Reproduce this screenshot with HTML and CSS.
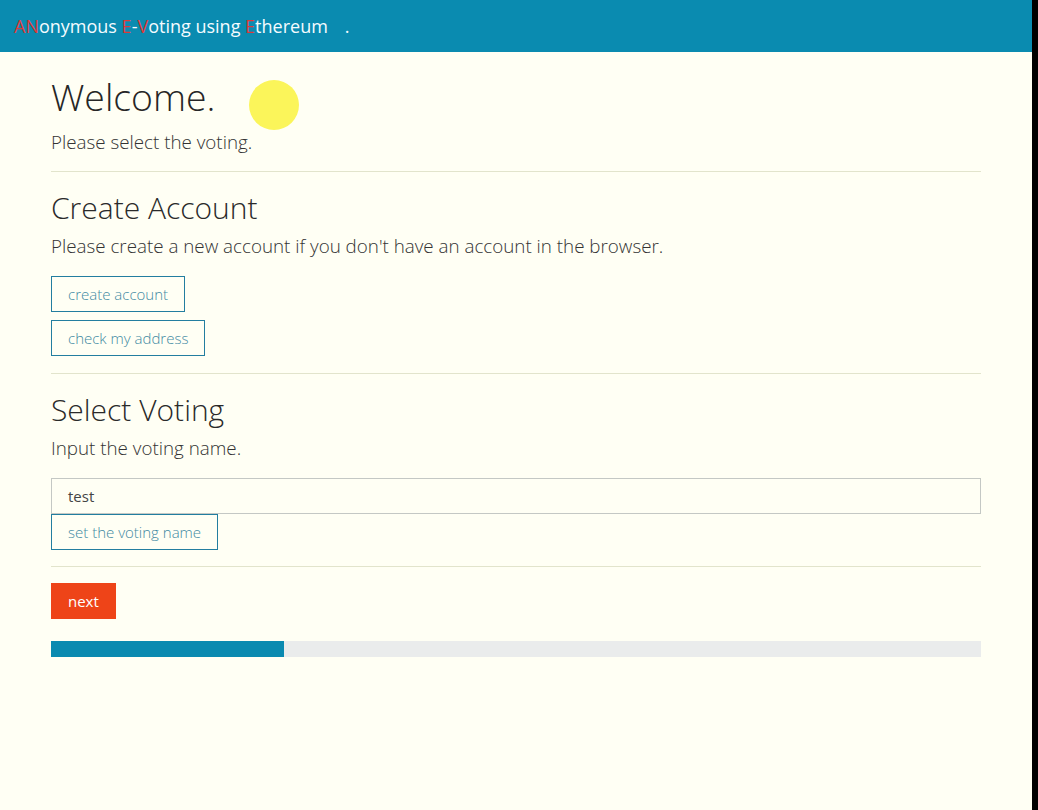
FILE: index.html
```html
<!DOCTYPE html>
<html>
<head>
<meta charset="utf-8">
<link rel="stylesheet" href="styles.css">
</head>
<body>
<div class="page">
  <header class="topbar">
    <span class="brand"><span class="r">AN</span>onymous <span class="r">E</span>-<span class="r">V</span>oting using <span class="r">E</span>thereum</span>
    <span class="dot">.</span>
  </header>
  <main class="content">
    <section class="intro">
      <h1>Welcome.</h1>
      <span class="spot"></span>
      <p>Please select the voting.</p>
    </section>
    <hr class="hr1">
    <section>
      <h2>Create Account</h2>
      <p>Please create a new account if you don't have an account in the browser.</p>
      <div class="stack">
        <button class="btn">create account</button>
        <button class="btn">check my address</button>
      </div>
    </section>
    <hr>
    <section>
      <h2>Select Voting</h2>
      <p>Input the voting name.</p>
      <div class="field">test</div>
      <button class="btn">set the voting name</button>
    </section>
    <hr class="hr3">
    <button class="next">next</button>
    <div class="progress"><div class="fill" style="width:25.1%"></div></div>
  </main>
</div>
<div class="edge"></div>
</body>
</html>
```
FILE: styles.css
```css
html, body {
  margin: 0;
  padding: 0;
  height: 100%;
}
body {
  background: #fffff4;
  font-family: "Open Sans", "DejaVu Sans", sans-serif;
  font-weight: 300;
  color: #2a2a2a;
  overflow: hidden;
}
.page {
  width: 1032px;
  min-height: 810px;
}
.edge {
  position: fixed;
  top: 0;
  right: 0;
  width: 6px;
  height: 100%;
  background: #000;
}
.topbar {
  height: 52px;
  background: #0a8bb0;
  display: flex;
  align-items: center;
  padding-left: 14px;
  color: #f4fbff;
  font-size: 18px;
  font-weight: 400;
}
.topbar .r { color: #dd3a38; }
.topbar .dot { margin-left: 17px; }
.content {
  padding: 0 51px;
  width: 930px;
}
.intro {
  position: relative;
  padding-top: 20px;
}
h1 {
  margin: 0;
  font-size: 37.4px;
  font-weight: 300;
  line-height: 50px;
  color: #262626;
}
.spot {
  position: absolute;
  left: 198px;
  top: 28px;
  width: 50px;
  height: 50px;
  border-radius: 50%;
  background: #fbf55a;
}
p {
  margin: 0;
  font-size: 18.8px;
  line-height: 26px;
  color: #333;
}
.intro p { margin-top: 7px; }
hr {
  border: 0;
  border-top: 1px solid #e2e4cc;
  margin: 17px 0 16px;
}
.hr1 { margin-top: 16px; }
h2 {
  margin: 0;
  font-size: 30px;
  font-weight: 300;
  line-height: 40px;
  color: #2a2a2a;
}
section p { margin-top: 5px; }
.stack {
  display: flex;
  flex-direction: column;
  align-items: flex-start;
  gap: 8px;
  margin-top: 17px;
}
.btn {
  font-family: inherit;
  font-weight: 300;
  font-size: 15px;
  color: #3f8aa3;
  background: transparent;
  border: 1px solid #237ea0;
  height: 36px;
  padding: 0 16px;
  display: block;
  cursor: pointer;
}
.field {
  margin-top: 17px;
  height: 34px;
  border: 1px solid #c4c8c4;
  box-sizing: content-box;
  padding: 0 16px;
  font-size: 15px;
  font-weight: 400;
  line-height: 34px;
  color: #444;
}
.hr3 { margin-top: 16px; }
.next {
  font-family: inherit;
  font-size: 15px;
  font-weight: 400;
  color: #fff;
  background: #ee4418;
  border: 0;
  height: 36px;
  padding: 0 17px;
  display: block;
}
.progress {
  margin-top: 22px;
  height: 16px;
  background: #eaecec;
}
.fill {
  height: 100%;
  background: #0a8ab0;
}
```
